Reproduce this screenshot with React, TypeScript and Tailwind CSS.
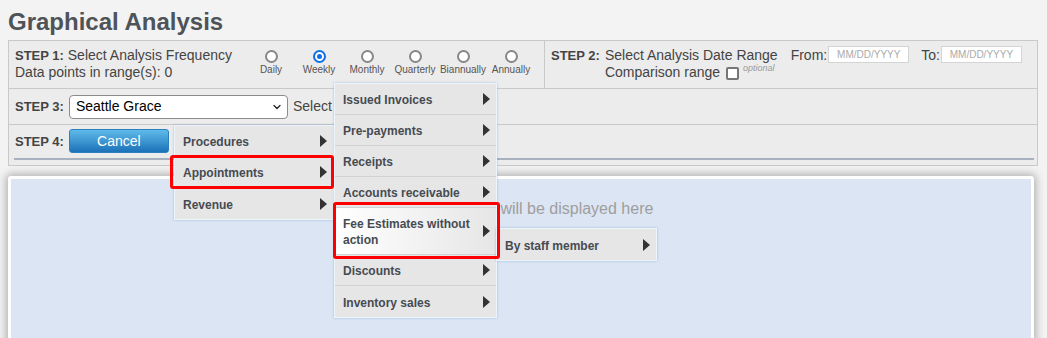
import { ChevronDown } from "lucide-react";
import clsx from "clsx";

const frequencies = ["Daily", "Weekly", "Monthly", "Quarterly", "Biannually", "Annually"];

const Arrow = () => (
  <svg width="7" height="12" viewBox="0 0 7 12" className="shrink-0">
    <path d="M0 0 L7 6 L0 12 Z" fill="#333" />
  </svg>
);

type ItemProps = { label: React.ReactNode; tall?: boolean; active?: boolean; last?: boolean };

const MenuItem = ({ label, tall, active, last }: ItemProps) => (
  <div
    className={clsx(
      "flex items-center justify-between pl-[8px] pr-[6px]",
      tall ? "h-[47px]" : "h-[31px]",
      !last && "border-b border-[#d2d2d2]",
      active && "bg-linear-to-r from-white to-[#e6e6e6]"
    )}
  >
    <span className="pt-[2px] text-[12px] font-bold leading-[16px] text-[#464b52]">{label}</span>
    <Arrow />
  </div>
);

const Radio = ({ label, checked }: { label: string; checked?: boolean }) => (
  <div className="w-[48px] flex flex-col items-center">
    <span
      className={clsx(
        "w-[13px] h-[13px] rounded-full border-2 bg-white flex items-center justify-center",
        checked ? "border-[#0b6fe8]" : "border-[#878787]"
      )}
    >
      {checked && <span className="w-[5px] h-[5px] rounded-full bg-[#0b6fe8]" />}
    </span>
    <span className="mt-[1px] text-[10px] leading-[12px] text-[#555]">{label}</span>
  </div>
);

const DateBox = () => (
  <div className="ml-[1px] w-[81px] h-[17px] border border-[#d4d4d4] bg-white text-center text-[10px] leading-[15px] text-[#aaa]">
    MM/DD/YYYY
  </div>
);

export default function App() {
  return (
    <div className="relative w-[1047px] h-[338px] overflow-hidden bg-[#f3f3f3] font-['Liberation_Sans',Arial,sans-serif] text-[#444]">
      <h1 className="h-[40px] pl-[8px] pt-[10px] text-[24px] leading-[24px] font-bold text-[#4e5358]">
        Graphical Analysis
      </h1>

      <div className="ml-[8px] w-[1030px] border border-[#c9c9c9] bg-[#ececec]">
        {/* row 1 */}
        <div className="flex h-[48px] border-b border-[#c9c9c9]">
          <div className="flex w-[536px] border-r border-[#c9c9c9]">
            <div className="w-[238px] pl-[6px] pt-[6px] text-[14px] leading-[17px]">
              <div>
                <span className="text-[13px] font-bold">STEP 1:</span> Select Analysis Frequency
              </div>
              <div>Data points in range(s): 0</div>
            </div>
            <div className="flex pt-[9px]">
              {frequencies.map((f) => (
                <Radio key={f} label={f} checked={f === "Weekly"} />
              ))}
            </div>
          </div>
          <div className="flex flex-1 pl-[6px] pt-[6px] text-[14px] leading-[17px]">
            <span className="mr-[5px] text-[13px] font-bold">STEP 2:</span>
            <div>
              <div className="flex items-start h-[17px]">
                <span>Select Analysis Date Range</span>
                <span className="ml-[13px]">From:</span>
                <div className="-mt-[1px] flex">
                  <DateBox />
                </div>
                <span className="ml-[12px]">To:</span>
                <div className="-mt-[1px] flex">
                  <DateBox />
                </div>
              </div>
              <div className="flex items-start h-[17px]">
                <span>Comparison range</span>
                <span className="ml-[6px] mt-[3px] w-[13px] h-[13px] rounded-[2px] border-2 border-[#767676] bg-white" />
                <span className="ml-[4px] -mt-[1px] text-[9px] leading-[10px] italic text-[#9a9a9a]">optional</span>
              </div>
            </div>
          </div>
        </div>

        {/* row 2 */}
        <div className="flex h-[36px] items-center border-b border-[#c9c9c9] pl-[6px] text-[14px]">
          <span className="text-[13px] font-bold leading-[15px]">STEP 3:</span>
          <div className="ml-[5px] flex h-[24px] w-[219px] items-center justify-between rounded-[4px] border border-[#8c8c8c] bg-white pl-[6px] pr-[4px] text-black">
            <span>Seattle Grace</span>
            <ChevronDown size={12} strokeWidth={2.5} color="#222" />
          </div>
          <span className="ml-[5px]">Select</span>
        </div>

        {/* row 3 */}
        <div className="h-[40px] pt-[4px]">
          <div className="flex h-[24px] items-center pl-[6px]">
            <span className="text-[13px] font-bold leading-[15px]">STEP 4:</span>
            <button className="ml-[5px] h-[24px] w-[100px] rounded-[3px] border border-[#2a80c0] bg-linear-to-b from-[#5fbbea] to-[#1b72b8] text-[14px] text-white">
              Cancel
            </button>
          </div>
          <div className="ml-[5px] mt-[5px] h-[2px] w-[1020px] bg-[#a7b1bf]" />
        </div>
      </div>

      <div className="ml-[8px] mt-[10px] h-[180px] w-[1026px] rounded-[3px] border-[3px] border-white bg-[#dce5f3] shadow-[0_0_8px_2px_rgba(0,0,0,0.28)]">
        <div className="pl-[412px] pt-[21px] text-[16px] leading-[18px] text-[#9e9e9e]">
          The graph will be displayed here
        </div>
      </div>

      {/* menus */}
      <div className="absolute left-[174px] top-[125px] w-[160px] border border-[#eef4fb] bg-[#e6e6e6] shadow-[0_0_2px_rgba(110,150,200,0.6)]">
        <MenuItem label="Procedures" />
        <MenuItem label="Appointments" />
        <MenuItem label="Revenue" last />
      </div>

      <div className="absolute left-[334px] top-[83px] w-[163px] border border-[#eef4fb] bg-[#e6e6e6] shadow-[0_0_2px_rgba(110,150,200,0.6)]">
        <MenuItem label="Issued Invoices" />
        <MenuItem label="Pre-payments" />
        <MenuItem label="Receipts" />
        <MenuItem label="Accounts receivable" />
        <MenuItem
          label={
            <>
              Fee Estimates without
              <br />
              action
            </>
          }
          tall
          active
        />
        <MenuItem label="Discounts" />
        <MenuItem label="Inventory sales" last />
      </div>

      <div className="absolute left-[496px] top-[228px] w-[161px] border border-[#eef4fb] bg-[#e6e6e6] shadow-[0_0_2px_rgba(110,150,200,0.6)]">
        <MenuItem label="By staff member" last />
      </div>

      {/* highlight boxes */}
      <div className="absolute left-[170px] top-[155px] h-[34px] w-[164px] rounded-[3px] border-[3px] border-[#ff0000]" />
      <div className="absolute left-[333px] top-[202px] h-[57px] w-[167px] rounded-[3px] border-[3px] border-[#ff0000]" />
    </div>
  );
}
